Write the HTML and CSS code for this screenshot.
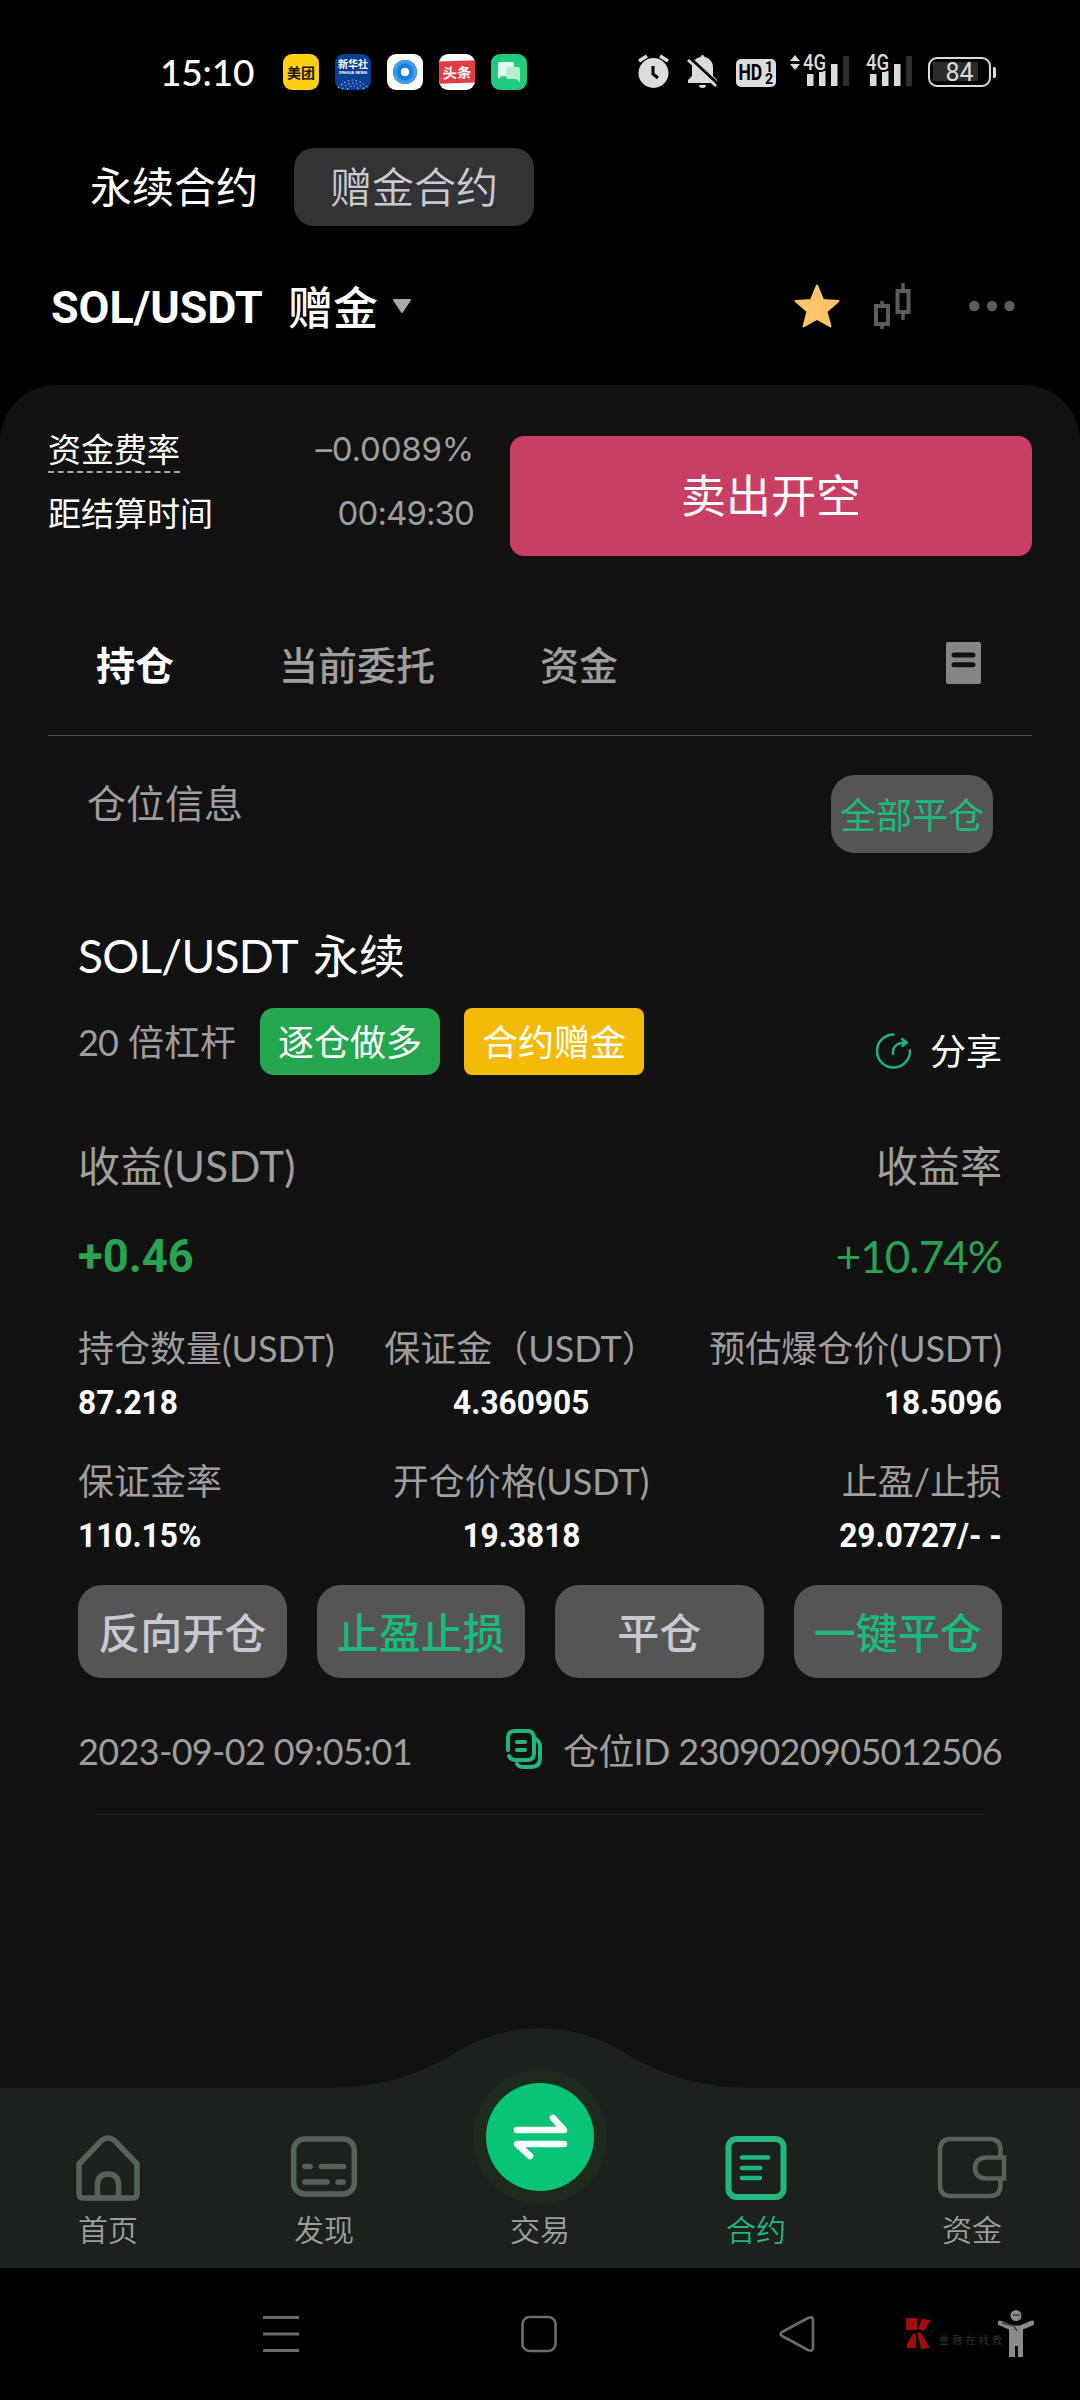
FILE: index.html
```html
<!DOCTYPE html>
<html lang="zh-CN">
<head>
<meta charset="utf-8">
<title>SOL/USDT 赠金合约</title>
<link rel="stylesheet" href="styles.css">
</head>
<body>
<div class="screen">
  <header class="status">
    <div class="status-left">
      <span class="clock">15:10</span>
      <span class="app app-meituan">美团</span>
      <span class="app app-xinhua"><b>新华社</b><i>XINHUA NEWS</i>
        <svg class="app-dots" width="36" height="13" viewBox="0 0 36 13"><path d="M3 11 Q18 -5 33 11 M7 12 Q18 0 29 12 M12 12.500 Q18 5 24 12.500" fill="none" stroke="#8fb4e8" stroke-width="1.200" stroke-dasharray="1.500 2.500"/></svg>
      </span>
      <span class="app app-ring"></span>
      <span class="app app-toutiao"><b>头条</b></span>
      <span class="app app-chat"><svg width="36" height="36" viewBox="0 0 36 36"><path d="M9 8h12a2 2 0 0 1 2 2v10a2 2 0 0 1-2 2H11l-4 3V10a2 2 0 0 1 2-2z" fill="#e4f8ee"/><path d="M17 13h10a2 2 0 0 1 2 2v13l-4-3h-8a2 2 0 0 1-2-2v-8a2 2 0 0 1 2-2z" fill="#b9edd2"/></svg></span>
    </div>
    <div class="status-right">
      <svg width="31" height="35" viewBox="0 0 31 35"><circle cx="15.500" cy="19" r="15" fill="#dcdcdc"/><path d="M1 7l8-5M30 7l-8-5" stroke="#dcdcdc" stroke-width="3.500"/><path d="M15 12v8l5 4" fill="none" stroke="#000" stroke-width="3"/></svg>
      <svg class="bell" width="31" height="35" viewBox="0 0 31 35"><path d="M13.500 3a2 2 0 0 1 4 0c5 1 8.500 5 8.500 10v9l4 4v3H1v-3l4-4v-9c0-5 3.500-9 8.500-10zM12 31h7a3.500 3 0 0 1-7 0z" fill="#dcdcdc"/><path d="M2 3l28 26" stroke="#000" stroke-width="3"/><path d="M1 6l28 26" stroke="#dcdcdc" stroke-width="2.800"/></svg>
      <span class="hd"><span class="hd-text">HD</span><span class="hd-nums"><i>1</i><i>2</i></span></span>
      <span class="signal signal-a">
        <svg width="59" height="33" viewBox="0 0 59 33"><path d="M0 7l5-6 5 6zM0 10l5 6 5-6z" fill="#dcdcdc"/><rect x="17" y="20" width="6.500" height="12"/><rect x="29" y="17" width="6.500" height="15"/><rect x="41" y="10" width="6.500" height="22"/><rect x="53" y="2" width="6" height="30" class="off"/></svg><b>4G</b>
      </span>
      <span class="signal signal-b">
        <svg width="46" height="33" viewBox="0 0 46 33"><rect x="4" y="20" width="6.500" height="12"/><rect x="16" y="17" width="6.500" height="15"/><rect x="28" y="10" width="6.500" height="22"/><rect x="40" y="2" width="6" height="30" class="off"/></svg><b>4G</b>
      </span>
      <span class="battery"><span class="battery-body">84</span><span class="battery-nub"></span></span>
    </div>
  </header>

  <nav class="modes">
    <span class="mode">永续合约</span>
    <span class="mode mode-on">赠金合约</span>
  </nav>

  <div class="pair">
    <span class="pair-name"><span class="din">SOL/USDT</span></span>
    <span class="pair-kind">赠金</span>
    <svg class="caret" width="20" height="15" viewBox="0 0 20 15"><path d="M2 1h16l-8 12z" fill="#a8a8a8" stroke="#a8a8a8" stroke-width="2" stroke-linejoin="round"/></svg>
    <span class="pair-tools">
      <svg width="46" height="44" viewBox="0 0 46 44"><path d="M23 1.500l6 14.500 15.500 1-12 10.500 4 15L23 35 9.500 42.500l4-15L1.500 17 17 16z" fill="#ffc36b" stroke="#ffc36b" stroke-width="2" stroke-linejoin="round"/></svg>
      <svg class="candles" width="38" height="46" viewBox="0 0 38 46"><g fill="none" stroke="#5c5c5c"><rect x="2" y="23" width="12" height="18" stroke-width="4"/><rect x="23.500" y="8" width="11" height="21" stroke-width="4"/><path d="M8 18v4M8 42v4M29 0v7M29 30v7" stroke-width="3.500"/></g></svg>
      <svg width="46" height="12" viewBox="0 0 46 12" fill="#5c5c5c"><circle cx="5.300" cy="6" r="5.200"/><circle cx="23" cy="6" r="5.200"/><circle cx="40.500" cy="6" r="5.200"/></svg>
    </span>
  </div>

  <main class="panel">
    <section class="funding">
      <div class="rates">
        <div class="rate"><span class="rate-name dashed">资金费率</span><span class="rate-value">–0.0089%</span></div>
        <div class="rate"><span class="rate-name">距结算时间</span><span class="rate-value rate-time">00:49:30</span></div>
      </div>
      <button class="sell">卖出开空</button>
    </section>

    <nav class="tabs">
      <span class="tab tab-on">持仓</span>
      <span class="tab">当前委托</span>
      <span class="tab">资金</span>
      <svg width="35" height="42" viewBox="0 0 35 42"><rect width="35" height="42" rx="2" fill="#858585"/><path d="M8 13h19M8 22.700h19" stroke="#121212" stroke-width="5" stroke-linecap="round"/></svg>
    </nav>

    <div class="info">
      <span class="info-title">仓位信息</span>
      <button class="close-all">全部平仓</button>
    </div>

    <article class="position">
      <h2 class="pos-name"><span class="latin">SOL/USDT</span><span>永续</span></h2>
      <div class="pos-tags">
        <span class="lever"><span class="lever-num">20</span><span>倍杠杆</span></span>
        <span class="tag tag-long">逐仓做多</span>
        <span class="tag tag-bonus">合约赠金</span>
        <span class="share"><svg width="36" height="36" viewBox="0 0 36 36" fill="none" stroke="#22b37b" stroke-width="2.500" stroke-linecap="round" stroke-linejoin="round"><path d="M17.500 1.500A16.500 16.500 0 1 0 34 17.500"/><path d="M17 21c-1-7 4-11.500 13-11.500M26 6l5 3.500-4.500 3.500"/></svg><span>分享</span></span>
      </div>

      <div class="pnl pnl-head"><span class="pnl-label">收益(USDT)</span><span>收益率</span></div>
      <div class="pnl pnl-num"><span class="din">+0.46</span><span class="pct">+10.74%</span></div>

      <div class="stats">
        <div class="stat"><span class="label">持仓数量(USDT)</span><span class="din">87.218</span></div>
        <div class="stat stat-mid"><span class="label">保证金（USDT）</span><span class="din">4.360905</span></div>
        <div class="stat stat-end"><span class="label">预估爆仓价(USDT)</span><span class="din">18.5096</span></div>
        <div class="stat"><span class="label">保证金率</span><span class="din">110.15%</span></div>
        <div class="stat stat-mid"><span class="label">开仓价格(USDT)</span><span class="din">19.3818</span></div>
        <div class="stat stat-end"><span class="label">止盈/止损</span><span class="din">29.0727/- -</span></div>
      </div>

      <div class="actions">
        <button class="action">反向开仓</button>
        <button class="action action-green">止盈止损</button>
        <button class="action">平仓</button>
        <button class="action action-green">一键平仓</button>
      </div>

      <div class="meta">
        <span class="date">2023-09-02 09:05:01</span>
        <span class="pos-id">
          <svg width="36" height="40" viewBox="0 0 36 40" fill="none" stroke="#20b67c" stroke-width="4" stroke-linecap="round" stroke-linejoin="round"><path d="M2 21V9q0-7 7-7h12q7 0 7 7v15q0 7-7 7H10q-5 0-7-4"/><path d="M30 10q4 3 4 7v12q0 9-9 9h-8q-4 0-6-3"/><path d="M11 13h8M11 21h8"/></svg>
          <span>仓位ID 2309020905012506</span>
        </span>
      </div>
    </article>
  </main>

  <footer class="tabbar">
    <svg class="tabbar-shape" width="1080" height="240" viewBox="0 0 1080 240"><path d="M0 60H325C385 60 425 44 460 22C510 -7 570 -7 620 22C655 44 695 60 755 60H1080V240H0z" fill="#1c211d"/></svg>
    <a class="item"><svg width="64" height="66" viewBox="0 0 64 66" fill="none" stroke="#566457" stroke-width="5.500" stroke-linejoin="round"><path d="M3 29L25 6q7-6 14 0L61 29V59q0 4-4 4H7q-4 0-4-4z"/><path d="M21.500 62V50q0-11 10.500-11t10.500 11v12"/></svg><span>首页</span></a>
    <a class="item"><svg width="66" height="66" viewBox="0 0 66 66" fill="none" stroke="#566457" stroke-width="5.500" stroke-linecap="round"><rect x="2.700" y="4" width="60.600" height="55" rx="11"/><path d="M14 31.500h5M30.500 31.500h22M14 47h22M47 47h5"/></svg><span>发现</span></a>
    <a class="item item-trade"><svg width="136" height="136" viewBox="0 0 136 136"><circle cx="68" cy="68" r="67" fill="#1c2b1e"/><circle cx="68" cy="68" r="54" fill="#07c477"/><path d="M45 61h47L81 49M92 75H45L58 87" fill="none" stroke="#fff" stroke-width="6.500" stroke-linecap="round" stroke-linejoin="round"/></svg><span>交易</span></a>
    <a class="item item-on"><svg width="62" height="66" viewBox="0 0 62 66" fill="none" stroke="#20b67c" stroke-width="6" stroke-linecap="round"><rect x="3.500" y="4" width="55" height="58" rx="8"/><path d="M17 22.500h26M17 33h18M17 43h18" stroke-width="4.500"/></svg><span>合约</span></a>
    <a class="item"><svg width="70" height="66" viewBox="0 0 70 66" fill="none" stroke="#566457" stroke-width="4.500"><path d="M63.500 22V15q0-11-11-11H14Q3 4 3 15v35q0 11 11 11h38.500q11 0 11-11v-7"/><path d="M67 22.500H49q-11 1-11 10.500t11 10.500H67zM67 20.500v24"/></svg><span>资金</span></a>
  </footer>

  <div class="sysnav">
    <svg width="36" height="38" viewBox="0 0 36 38" stroke="#6c6c6c" stroke-width="3"><path d="M0 2.500h36M0 19h36M0 35.500h36"/></svg>
    <svg class="sys-home" width="36" height="38" viewBox="0 0 36 38" fill="none" stroke="#6c6c6c" stroke-width="2.600"><rect x="1.500" y="2" width="33" height="34" rx="7"/></svg>
    <svg class="sys-back" width="36" height="38" viewBox="0 0 36 38" fill="none" stroke="#6c6c6c" stroke-width="2.600" stroke-linejoin="round"><path d="M3 17L29 3q5-2 5 2v28q0 4-5 2L3 21q-3-2 0-4z"/></svg>
    <span class="mark"><svg width="30" height="34" viewBox="0 0 30 34"><path d="M3 1h11v12H3zM15 12L19 2l9 1-7 11zM14 15l4 1 9 15-9 1zM13 17v14H4v-4l6-10z" fill="#a30d0d"/><path d="M1 15q0 8 7 6M29 12q2 6-7 8" fill="none" stroke="#331010"/></svg><span class="mark-text">金融在线教</span></span>
    <svg class="person" width="36" height="48" viewBox="0 0 36 48"><circle cx="18" cy="5.500" r="5.500" fill="#8a8a8a"/><path d="M2 13l12 5h8l12-5" fill="none" stroke="#8a8a8a" stroke-width="5" stroke-linecap="round"/><path d="M11 17h14v30h-5V36h-3v11h-6z" fill="#8a8a8a"/><path d="M4 13l12 3 3 5M15 5h7" fill="none" stroke="#444" stroke-width="1.500"/></svg>
  </div>
</div>
</body>
</html>
```
FILE: styles.css
```css
* { box-sizing: border-box; }
body { margin: 0; background: #000; }
.screen {
  width: 1080px; height: 2400px; background: #000; color: #fff;
  display: flex; flex-direction: column; overflow: hidden;
  font-family: Lato, "Noto Sans CJK SC", sans-serif; font-weight: 400; line-height: 1;
}
svg { display: block; flex: none; }
button { border: 0; padding: 0; font: inherit; color: inherit; display: flex; align-items: center; justify-content: center; }
span { white-space: nowrap; }
i { font-style: normal; }
.din { font-family: Roboto, sans-serif; font-weight: 700; display: inline-block; transform: scaleX(.93); transform-origin: left center; }

/* status bar */
.status { height: 148px; padding: 54px 84px 0 160px; display: flex; justify-content: space-between; flex: none; }
.status-left { display: flex; gap: 16px; height: 36px; }
.clock { width: 107px; font: 500 37px/36px Lato, sans-serif; letter-spacing: -.2px; }
.app { width: 36px; height: 36px; border-radius: 9px; overflow: hidden; display: flex; flex-direction: column; align-items: center; flex: none; }
.app-meituan { background: #ffd012; color: #1a1400; font: 700 14px/36px "Noto Sans CJK SC", sans-serif; }
.app-xinhua { background: #0b3f94; }
.app-xinhua b { font: 700 10px/12px "Noto Sans CJK SC", sans-serif; margin-top: 4px; }
.app-xinhua i { font: 700 4px/5px "Liberation Sans", sans-serif; }
.app-dots { margin-top: 2px; }
.app-ring { background: radial-gradient(circle, #fff 0 4px, #1f7fe0 4.500px 8px, #3f9bf0 9px 12px, #fff 12.500px); }
.app-toutiao { background: #fff; justify-content: center; }
.app-toutiao b { width: 36px; background: #e23c45; text-align: center; font: 700 14px/22px "Noto Sans CJK SC", sans-serif; transform: rotate(-2deg) scaleX(1.03); }
.app-chat { background: #21cb7c; }
.status-right { display: flex; height: 36px; align-items: flex-start; }
.bell { margin-left: 18px; }
.hd { margin: 5px 0 0 18px; width: 40px; height: 28px; border-radius: 5px; background: #dcdcdc; color: #000; display: flex; align-items: center; font: 700 22px/28px Roboto, sans-serif; overflow: hidden; }
.hd-text { width: 25px; padding-left: 3px; transform: scaleX(.8); transform-origin: left center; }
.hd-nums { display: flex; flex-direction: column; font-size: 14px; line-height: 12px; margin-left: 4px; }
.signal { position: relative; margin-left: 14px; fill: #dcdcdc; color: #dcdcdc; }
.signal-b { margin-left: 17px; }
.signal .off { fill: #2e2e2e; }
.signal b { position: absolute; top: 0; left: 13px; font: 500 22px/17px Roboto, sans-serif; transform: scaleX(.84); transform-origin: left center; text-shadow: 0 2px #000; }
.signal-b b { left: 0; }
.battery { display: flex; align-items: center; margin: 3px 0 0 16px; gap: 2px; }
.battery-body { width: 63px; height: 30px; border: 2.500px solid #dcdcdc; border-radius: 9px; background: linear-gradient(90deg, #2b2b2b 45px, #000 45px) 3px 3px / 52px 19px no-repeat; color: #dcdcdc; font: 400 25px/27px Roboto, sans-serif; text-align: center; }
.battery-nub { width: 3px; height: 11px; background: #dcdcdc; border-radius: 0 2px 2px 0; }

/* contract mode switch */
.modes { height: 78px; padding-left: 90px; display: flex; gap: 36px; font-size: 42px; line-height: 78px; flex: none; }
.mode-on { width: 240px; border-radius: 20px; background: #333336; color: #c9c9d2; text-align: center; font-weight: 350; }

/* trading pair */
.pair { height: 159px; padding: 3px 65px 2px 51px; display: flex; align-items: center; flex: none; }
.pair-name { width: 237px; font-size: 45px; padding-top: 2px; }
.pair-name .din { transform: scaleX(.995); }
.pair-kind { font-size: 45px; font-weight: 500; padding-top: 4px; }
.caret { margin-left: 14px; }
.pair-tools { margin-left: auto; display: flex; align-items: center; }
.candles { margin: 0 57px 0 34px; }

/* main panel */
.panel { height: 1703px; background: #121212; border-radius: 56px 56px 0 0; padding: 51px 48px 0; flex: none; }
.funding { display: flex; justify-content: space-between; height: 120px; }
.rates { width: 426px; display: flex; flex-direction: column; gap: 23px; }
.rate { display: flex; justify-content: space-between; height: 41px; font-size: 33px; }
.rate-name { height: 37px; line-height: 27px; }
.dashed { border-bottom: 2px dashed #a5a5a5; }
.rate-value { color: #9e9e9e; font-family: Inter, sans-serif; font-weight: 400; line-height: 27px; letter-spacing: -.2px; }
.rate-time { letter-spacing: -.9px; }
.sell { width: 522px; height: 120px; border-radius: 14px; background: #c93f64; color: #fff; font-size: 45px; }
.tabs { height: 180px; border-bottom: 1px solid #4c4c4c; padding: 40px 51px 0 48px; display: flex; align-items: center; font-size: 39px; font-weight: 500; color: #9e9e9e; }
.tab { margin-right: 105px; }
.tab-on { color: #fff; font-weight: 700; }
.tabs svg { margin: 0 0 5px auto; }
.info { display: flex; justify-content: space-between; padding: 39px 39px 0 39px; height: 190px; font-size: 39px; color: #9e9e9e; }
.info-title { line-height: 56px; }
.close-all { width: 162px; height: 78px; border-radius: 24px; background: #555; color: #1abb7b; font-size: 36px; padding-top: 2px; }

/* position card */
.position { padding: 0 30px; }
.pos-name { margin: 0; height: 82px; font-size: 46px; font-weight: 400; line-height: 60px; display: flex; }
.latin { width: 235px; letter-spacing: -.7px; }
.pos-tags { height: 67px; display: flex; align-items: center; font-size: 36px; }
.lever { width: 182px; display: flex; color: #9e9e9e; }
.lever-num { width: 50px; letter-spacing: -1px; }
.tag { width: 180px; height: 67px; margin-right: 24px; display: flex; align-items: center; justify-content: center; }
.tag-long { background: #25a750; border-radius: 14px; }
.tag-bonus { background: #f3ba07; border-radius: 8px; }
.share { margin-left: auto; display: flex; align-items: center; gap: 18px; padding-top: 18px; }
.pnl { display: flex; justify-content: space-between; align-items: center; }
.pnl-head { height: 90px; margin-top: 46px; font-size: 42px; color: #9e9e9e; }
.pnl-label { letter-spacing: .3px; }
.pnl-num { height: 90px; font-size: 46px; color: #2aa350; }
.pnl-num .din { transform: scaleX(.985); }
.pct { font-size: 44px; letter-spacing: -1px; }
.stats { display: grid; grid-template-columns: 278px 330px 1fr; row-gap: 33px; padding-top: 19px; }
.stat { display: flex; flex-direction: column; align-items: flex-start; height: 100px; font-size: 36px; }
.stat .label { color: #9e9e9e; line-height: 56px; }
.stat .din { font-size: 34px; line-height: 52px; }
.stat-mid { align-items: center; }
.stat-mid .din { transform-origin: center; }
.stat-end { align-items: flex-end; }
.stat-end .din { transform-origin: right center; }
.actions { margin-top: 32px; display: grid; grid-template-columns: repeat(4, 1fr); column-gap: 30px; }
.action { height: 93px; border-radius: 24px; background: #555; color: #c8c8d2; font-size: 42px; font-weight: 500; padding-top: 2px; }
.action-green { color: #1abb7b; }
.meta { display: flex; justify-content: space-between; align-items: center; height: 136px; padding-top: 9px; font-size: 36px; color: #9e9e9e; letter-spacing: -.65px; }
.pos-id { display: flex; align-items: center; gap: 21px; }
.pos-id svg { margin-bottom: 4px; }
.position::after { content: ""; display: block; height: 1px; margin: 0 18px; background: #262626; }

/* bottom tabs */
.tabbar { height: 180px; flex: none; position: relative; display: grid; grid-template-columns: repeat(5, 1fr); background: #1c211d; }
.tabbar-shape { position: absolute; left: 0; bottom: 0; }
.item { position: relative; display: flex; flex-direction: column; align-items: center; justify-content: flex-end; gap: 13px; padding-bottom: 24px; height: 180px; font-size: 30px; font-weight: 350; color: #9a9f9a; }
.item-trade { gap: 9px; }
.item-on { color: #20b67c; }

/* system navigation */
.sysnav { height: 132px; flex: none; padding: 0 48px 0 263px; display: flex; align-items: center; }
.sys-home { margin-left: 222px; }
.sys-back { margin-left: 222px; }
.mark { margin-left: 88px; display: flex; align-items: center; gap: 6px; color: #333; font-size: 10px; letter-spacing: 3.300px; }
.mark-text { padding-top: 12px; }
.person { margin-left: -8px; }
```
